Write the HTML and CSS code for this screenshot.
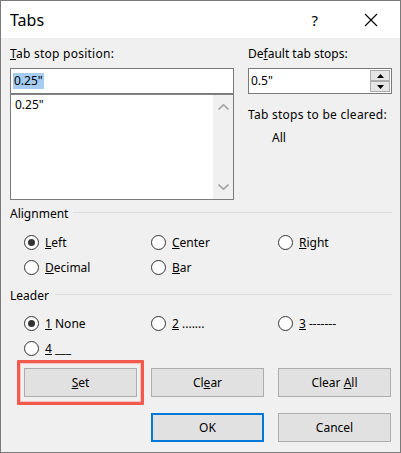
FILE: index.html
```html
<!DOCTYPE html>
<html>
<head>
<meta charset="utf-8">
<link rel="stylesheet" href="styles.css">
</head>
<body>
<div class="window">
  <div class="titlebar">
    <span class="title">Tabs</span>
    <span class="help">?</span>
    <svg class="close" width="14" height="14" viewBox="0 0 14 14"><path d="M1 1L13 13M13 1L1 13" stroke="#000" stroke-width="1.1" fill="none"/></svg>
  </div>
  <div class="content">
    <div class="top">
      <div class="col">
        <div class="label wide"><u>T</u>ab stop position:</div>
        <div class="input"><span class="sel">0.25"</span></div>
        <div class="listbox">
          <div class="items"><div class="item">0.25"</div></div>
          <div class="scrollbar">
            <svg width="11" height="6" viewBox="0 0 11 6"><path d="M0.5 5.5L5.5 0.8L10.5 5.5" stroke="#a6a6a6" stroke-width="1.6" fill="none"/></svg>
            <svg width="11" height="6" viewBox="0 0 11 6"><path d="M0.5 0.5L5.5 5.2L10.5 0.5" stroke="#a6a6a6" stroke-width="1.6" fill="none"/></svg>
          </div>
        </div>
      </div>
      <div class="col">
        <div class="label">De<u>f</u>ault tab stops:</div>
        <div class="input spin-input">
          <span class="value">0.5"</span>
          <div class="spin">
            <div class="spin-btn"><svg width="7" height="4" viewBox="0 0 7 4"><path d="M0 4L3.5 0L7 4Z" fill="#000"/></svg></div>
            <div class="spin-btn"><svg width="7" height="4" viewBox="0 0 7 4"><path d="M0 0L3.5 4L7 0Z" fill="#000"/></svg></div>
          </div>
        </div>
        <div class="label cleared wide">Tab stops to be cleared:</div>
        <div class="label all">All</div>
      </div>
    </div>

    <div class="legend legend-align"><span>Alignment</span><div class="rule"></div></div>
    <div class="radios radios-align">
      <div class="radio"><span class="circle checked"></span><span><u>L</u>eft</span></div>
      <div class="radio"><span class="circle"></span><span><u>C</u>enter</span></div>
      <div class="radio"><span class="circle"></span><span><u>R</u>ight</span></div>
      <div class="radio"><span class="circle"></span><span><u>D</u>ecimal</span></div>
      <div class="radio"><span class="circle"></span><span><u>B</u>ar</span></div>
    </div>

    <div class="legend legend-leader"><span>Leader</span><div class="rule"></div></div>
    <div class="radios radios-leader">
      <div class="radio"><span class="circle checked"></span><span><u>1</u> None</span></div>
      <div class="radio"><span class="circle"></span><span><u>2</u> .......</span></div>
      <div class="radio"><span class="circle"></span><span><u>3</u> -------</span></div>
      <div class="radio"><span class="circle"></span><span><u>4</u> ___</span></div>
    </div>

    <div class="buttons row1">
      <div class="btn highlight"><span><u>S</u>et</span></div>
      <div class="btn"><span>Cl<u>e</u>ar</span></div>
      <div class="btn"><span>Clear <u>A</u>ll</span></div>
    </div>
    <div class="buttons row2">
      <div></div>
      <div class="btn default"><span>OK</span></div>
      <div class="btn"><span>Cancel</span></div>
    </div>
  </div>
</div>
</body>
</html>
```

FILE: styles.css
```css
html, body {
  margin: 0;
  padding: 0;
  background: #f0f0f0;
}
body {
  font-family: "Segoe UI", "Noto Sans", "Open Sans", sans-serif;
  font-size: 12px;
  color: #000;
}
.window {
  width: 401px;
  height: 453px;
  box-sizing: border-box;
  border: 1px solid #7a7a7a;
  background: #f0f0f0;
  display: flex;
  flex-direction: column;
}
.titlebar {
  height: 37px;
  flex: none;
  background: #fff;
  display: flex;
  align-items: center;
  padding-left: 9px;
}
.title {
  flex: 1;
  font-size: 16px;
  line-height: 20px;
}
.help {
  font-size: 15px;
  line-height: 20px;
  margin-right: 46px;
}
.close {
  margin-right: 22px;
}
.content {
  padding: 8px 8px 0 9px;
}
.top {
  display: grid;
  grid-template-columns: 224px 144px;
  column-gap: 14px;
}
.label {
  line-height: 16px;
  height: 16px;
  white-space: nowrap;
}
.label.wide {
  letter-spacing: 0.25px;
}
.col > .label:first-child {
  margin-bottom: 6px;
}
.input {
  height: 26px;
  box-sizing: border-box;
  border: 1px solid #7a7a7a;
  background: #fff;
  display: flex;
  align-items: center;
  padding-left: 2px;
}
.sel {
  background: #a6cdf1;
  line-height: 16px;
  padding: 0 1px;
}
.listbox {
  height: 106px;
  box-sizing: border-box;
  border: 1px solid #7a7a7a;
  border-top-color: #828282;
  background: #fff;
  display: flex;
}
.items {
  flex: 1;
  padding: 2px 4px;
}
.item {
  line-height: 16px;
}
.scrollbar {
  width: 20px;
  background: #f0f0f0;
  display: flex;
  flex-direction: column;
  justify-content: space-between;
  align-items: center;
  padding: 9px 0;
}
.scrollbar svg {
  display: block;
}
.value {
  flex: 1;
  line-height: 16px;
}
.spin {
  width: 20px;
  margin-right: 1px;
  display: flex;
  flex-direction: column;
}
.spin-btn {
  height: 11px;
  box-sizing: border-box;
  border: 1px solid #acacac;
  background: #e5e5e5;
  display: flex;
  align-items: center;
  justify-content: center;
}
.spin-btn svg {
  display: block;
}
.cleared {
  margin-top: 13px;
}
.all {
  margin-top: 7px;
  padding-left: 24px;
}
.legend {
  display: flex;
  align-items: center;
  height: 16px;
  line-height: 16px;
}
.legend-align {
  margin-top: 6px;
}
.legend-leader {
  margin-top: 11px;
}
.legend-align .rule {
  margin-left: 5px;
}
.legend-leader .rule {
  margin-left: 6px;
}
.rule {
  flex: 1;
  height: 1px;
  background: #dcdcdc;
  margin-bottom: 4px;
}
.radios {
  display: grid;
  grid-template-columns: 127px 127px 1fr;
  grid-auto-rows: 20px;
  row-gap: 5px;
  padding-left: 14px;
}
.radios-align {
  margin-top: 10px;
}
.radios-leader {
  margin-top: 9px;
}
.radio {
  display: flex;
  align-items: center;
  white-space: nowrap;
}
.circle {
  width: 15px;
  height: 15px;
  box-sizing: border-box;
  border: 1px solid #333;
  border-radius: 50%;
  background: #fff;
  margin-right: 6px;
  display: flex;
  align-items: center;
  justify-content: center;
  flex: none;
}
.circle.checked::after {
  content: "";
  width: 7px;
  height: 7px;
  border-radius: 50%;
  background: #333;
}
.buttons {
  display: grid;
  grid-template-columns: 113px 113px 113px;
  column-gap: 14px;
  padding-left: 14px;
}
.row1 {
  margin-top: 10px;
}
.row2 {
  margin-top: 16px;
}
.btn {
  height: 29px;
  box-sizing: border-box;
  border: 1px solid #adadad;
  background: #e1e1e1;
  display: flex;
  align-items: center;
  justify-content: center;
  position: relative;
}
.btn.default {
  border: 2px solid #0078d7;
}
.highlight::after {
  content: "";
  position: absolute;
  left: -8px;
  right: -8px;
  top: -9px;
  bottom: -9px;
  border: 3px solid #f25a4e;
  box-shadow: inset 0 0 0 1px #f6c2bd;
  border-radius: 1px;
}
```
